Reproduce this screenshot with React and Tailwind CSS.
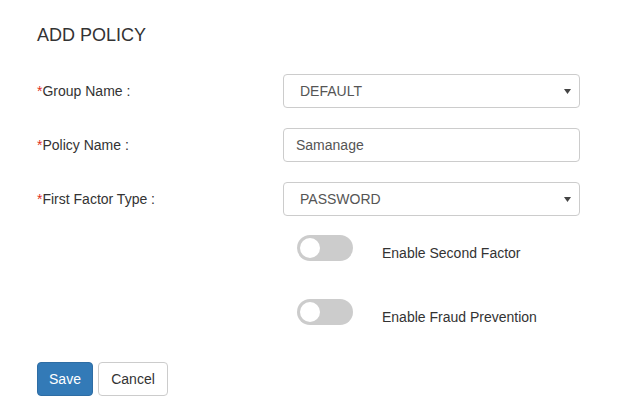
import React from "react";

function Arrow() {
  return (
    <svg width="7" height="5" viewBox="0 0 7 5" className="absolute right-[8px] top-[14px]">
      <path d="M0 0 L7 0 L3.5 5 Z" fill="#444" />
    </svg>
  );
}

function Row({ label, children }) {
  return (
    <div className="flex items-center h-[34px]">
      <div className="w-[246px] text-[14px] text-[#333]">
        <span className="text-[#e0301e]">*</span>
        {label}
      </div>
      {children}
    </div>
  );
}

function Toggle({ text }) {
  return (
    <div className="flex items-start pl-[260px]">
      <div className="w-[56px] h-[26px] rounded-full bg-[#cccccc] flex items-center pl-[3px]">
        <div className="w-[20px] h-[20px] rounded-full bg-white" />
      </div>
      <span className="ml-[29px] mt-[8px] text-[14px] leading-[20px] text-[#333]">{text}</span>
    </div>
  );
}

export default function App() {
  return (
    <div
      className="w-[639px] h-[407px] bg-white pl-[37px] pt-[25px]"
      style={{ fontFamily: '"Liberation Sans", Arial, sans-serif' }}
    >
      <h1 className="text-[18px] leading-[20px] text-[#333]">ADD POLICY</h1>
      <div className="mt-[29px] flex flex-col gap-[20px]">
        <Row label="Group Name :">
          <div className="relative w-[297px] h-[34px] border border-[#ccc] rounded-[4px] flex items-center pl-[16px] text-[14px] text-[#555]">
            DEFAULT
            <Arrow />
          </div>
        </Row>
        <Row label="Policy Name :">
          <div className="w-[297px] h-[34px] border border-[#ccc] rounded-[4px] flex items-center pl-[12px] text-[14px] text-[#555]">
            Samanage
          </div>
        </Row>
        <Row label="First Factor Type :">
          <div className="relative w-[297px] h-[34px] border border-[#ccc] rounded-[4px] flex items-center pl-[16px] text-[14px] text-[#555]">
            PASSWORD
            <Arrow />
          </div>
        </Row>
      </div>
      <div className="mt-[19px] flex flex-col gap-[36px]">
        <Toggle text="Enable Second Factor" />
        <Toggle text="Enable Fraud Prevention" />
      </div>
      <div className="mt-[35px] flex gap-[5px]">
        <button className="w-[56px] h-[34px] rounded-[4px] bg-[#337ab7] border border-[#2e6da4] text-white text-[14px]">
          Save
        </button>
        <button className="w-[70px] h-[34px] rounded-[4px] bg-white border border-[#ccc] text-[#333] text-[14px]">
          Cancel
        </button>
      </div>
    </div>
  );
}
